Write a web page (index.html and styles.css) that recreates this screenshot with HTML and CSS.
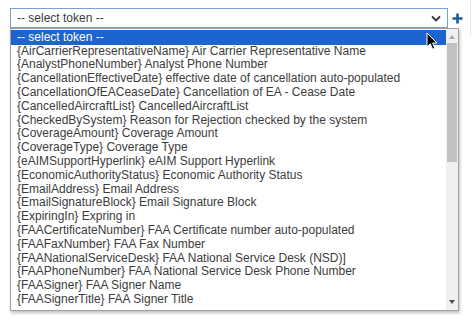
FILE: index.html
```html
<!DOCTYPE html>
<html lang="en">
<head>
    <meta charset="UTF-8">
    <title>Select token</title>
    <link rel="stylesheet" href="styles.css">
</head>
<body>
    <div class="panel-edge"></div>
    <div class="token-row">
        <div class="token-select">
            <span>-- select token --</span>
            <svg class="chevron" width="10" height="7" viewBox="0 0 10 7"><path d="M1 1.5 L5 5.5 L9 1.5" fill="none" stroke="#333" stroke-width="1.8"/></svg>
        </div>
        <svg class="add-btn" width="11" height="11" viewBox="0 0 11 11"><path d="M5.5 0.5 V10.5 M0.5 5.5 H10.5" stroke="#1f5b9b" stroke-width="2.6"/></svg>
    </div>

    <div class="dropdown">
        <ul class="options">
            <li class="selected">-- select token --</li>
            <li>{AirCarrierRepresentativeName} Air Carrier Representative Name</li>
            <li>{AnalystPhoneNumber} Analyst Phone Number</li>
            <li>{CancellationEffectiveDate} effective date of cancellation auto-populated</li>
            <li>{CancellationOfEACeaseDate} Cancellation of EA - Cease Date</li>
            <li>{CancelledAircraftList} CancelledAircraftList</li>
            <li>{CheckedBySystem} Reason for Rejection checked by the system</li>
            <li>{CoverageAmount} Coverage Amount</li>
            <li>{CoverageType} Coverage Type</li>
            <li>{eAIMSupportHyperlink} eAIM Support Hyperlink</li>
            <li>{EconomicAuthorityStatus} Economic Authority Status</li>
            <li>{EmailAddress} Email Address</li>
            <li>{EmailSignatureBlock} Email Signature Block</li>
            <li>{ExpiringIn} Expring in</li>
            <li>{FAACertificateNumber} FAA Certificate number auto-populated</li>
            <li>{FAAFaxNumber} FAA Fax Number</li>
            <li>{FAANationalServiceDesk} FAA National Service Desk (NSD)]</li>
            <li>{FAAPhoneNumber} FAA National Service Desk Phone Number</li>
            <li>{FAASigner} FAA Signer Name</li>
            <li>{FAASignerTitle} FAA Signer Title</li>
        </ul>
        <div class="scrollbar">
            <span class="arrow-up"></span>
            <div class="thumb"></div>
            <span class="arrow-down"></span>
        </div>
        <svg class="cursor" width="13" height="19" viewBox="0 0 13 19"><path d="M1 1 V15 L4.3 11.8 L6.6 17.2 L8.8 16.2 L6.6 11 H11 Z" fill="#000" stroke="#fff" stroke-width="1"/></svg>
    </div>
</body>
</html>
```

FILE: styles.css
```css
body {
    margin: 0;
    background: #fff;
    font-family: "Liberation Sans", Arial, sans-serif;
    font-size: 12px;
    color: #3c3c3c;
    position: relative;
    width: 472px;
    height: 320px;
    overflow: hidden;
}
.panel-edge {
    position: absolute;
    left: 470px;
    top: 0;
    width: 1px;
    height: 36px;
    background: #e4e4e4;
}
.token-row {
    display: flex;
    align-items: center;
    gap: 4px;
    padding: 8px 0 0 10px;
}
.token-select {
    box-sizing: border-box;
    width: 438px;
    height: 20px;
    border: 1px solid #7aa0cf;
    display: flex;
    align-items: center;
    justify-content: space-between;
    padding: 0 6px 0 6px;
    color: #3c3c3c;
}
.chevron {
    margin-right: 0;
}
.add-btn {
    display: block;
}
.dropdown {
    position: absolute;
    left: 10px;
    top: 28px;
    box-sizing: border-box;
    width: 449px;
    height: 283px;
    border: 1px solid #a0a0a0;
    background: #fff;
    box-shadow: 1px 2px 3px rgba(0, 0, 0, 0.25);
    display: flex;
}
.options {
    list-style: none;
    margin: 0;
    padding: 1px 0 0 0;
    flex: 1;
}
.options li {
    height: 13.8px;
    line-height: 13.8px;
    padding-left: 6px;
    white-space: nowrap;
}
.options li.selected {
    background: #1d64cf;
    color: #fff;
    height: 14.6px;
    line-height: 14.6px;
}
.scrollbar {
    width: 12px;
    background: #f0f0f0;
    display: flex;
    flex-direction: column;
    align-items: center;
}
.arrow-up {
    margin-top: 6px;
    width: 0;
    height: 0;
    border-left: 3.5px solid transparent;
    border-right: 3.5px solid transparent;
    border-bottom: 4px solid #a8a8a8;
}
.thumb {
    margin-top: 4px;
    width: 10px;
    height: 119px;
    background: #c1c1c1;
}
.arrow-down {
    margin-top: auto;
    margin-bottom: 6px;
    width: 0;
    height: 0;
    border-left: 3.5px solid transparent;
    border-right: 3.5px solid transparent;
    border-top: 4px solid #505050;
}
.cursor {
    position: absolute;
    left: 415px;
    top: 3px;
}
```
